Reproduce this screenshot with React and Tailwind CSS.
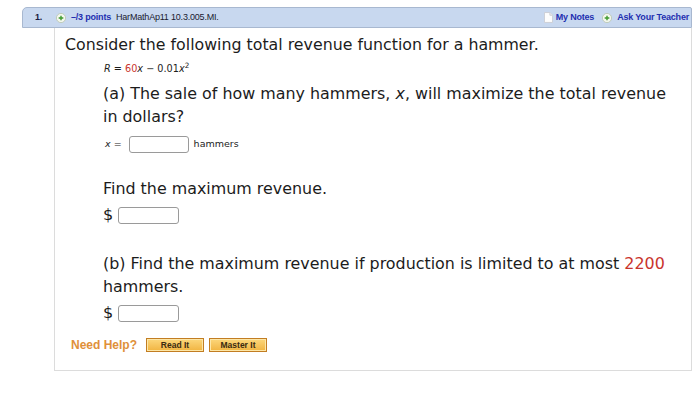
import { useState } from "react";

const PlusIcon = () => (
  <svg width="10" height="10" viewBox="0 0 12 12" className="shrink-0">
    <circle cx="6" cy="6" r="5.5" fill="#f4f7ef" stroke="#b9c6b0" />
    <path d="M6 3.2v5.6M3.2 6h5.6" stroke="#3f9a2e" strokeWidth="1.7" />
  </svg>
);

const NoteIcon = () => (
  <svg width="9" height="11" viewBox="0 0 10 12" className="shrink-0">
    <path d="M0.5 0.5h6l3 3v8h-9z" fill="#fdfdfd" stroke="#c9ccd2" />
    <path d="M6.5 0.5v3h3" fill="#e9ebee" stroke="#c9ccd2" />
  </svg>
);

const Box = ({ w }) => (
  <input
    className={`h-[17px] ${w} rounded-[3px] border border-[#9a9a9a] bg-white outline-none`}
  />
);

const HelpBtn = ({ label }) => (
  <button className="h-[14px] w-[58px] border border-[#c27d22] bg-gradient-to-b from-[#fcd77a] to-[#f1b43e] text-[8.5px] font-bold leading-none text-[#3a2a10] shadow-[inset_0_0_0_1px_#fde7a8]">
    {label}
  </button>
);

export default function App() {
  const [x, setX] = useState("");
  return (
    <div className="h-[405px] w-[700px] bg-white pl-[22px] pt-[7px]">
      <div className="w-[670px]">
        <div
          className="flex h-[21px] items-center rounded-tl-[5px] rounded-tr-[2px] border border-[#a8b8d0] bg-[#c8d8ef] pr-[2px] text-[9px] font-bold tracking-[-0.2px]"
          style={{ fontFamily: "'Liberation Sans', Arial, sans-serif" }}
        >
          <span className="ml-[12px] w-[21px] text-[#1a1a40]">1.</span>
          <PlusIcon />
          <span className="ml-[5px] text-[#1f2fb0]">–/3 points</span>
          <span className="ml-[5px] font-normal text-[#1a1a30]">HarMathAp11 10.3.005.MI.</span>
          <div className="ml-auto flex items-center">
            <NoteIcon />
            <span className="ml-[3px] text-[#1f2fb0]">My Notes</span>
            <span className="ml-[8px]">
              <PlusIcon />
            </span>
            <span className="ml-[5px] text-[#1f2fb0]">Ask Your Teacher</span>
          </div>
        </div>
        <div
          className="ml-[32px] h-[343px] border-b border-l border-r border-[#dcdcdc] pl-[10px] pt-[7px] text-[#1c1c1c]"
          style={{ fontFamily: "'DejaVu Sans', Verdana, sans-serif" }}
        >
          <p className="text-[15.8px] leading-[20px]">
            Consider the following total revenue function for a hammer.
          </p>
          <p className="ml-[39px] mt-[7px] text-[9.7px] leading-[13px]">
            <i>R</i> = <span className="text-[#c9342c]">60</span>
            <i>x</i> − 0.01<i>x</i>
            <sup>2</sup>
          </p>
          <div className="ml-[38px] mt-[7px]">
            <p className="text-[15.9px] leading-[23px]">
              (a) The sale of how many hammers, <i>x</i>, will maximize the total revenue
              <br />
              in dollars?
            </p>
            <div className="mt-[8px] flex items-center text-[9.5px]">
              <span className="ml-[2px] mr-[7px]">
                <i>x</i> =
              </span>
              <input
                value={x}
                onChange={(e) => setX(e.target.value)}
                className="h-[17px] w-[60px] rounded-[3px] border border-[#9a9a9a] bg-white outline-none"
              />
              <span className="ml-[5px]">hammers</span>
            </div>
            <p className="mt-[24px] text-[15.9px] leading-[23px]">Find the maximum revenue.</p>
            <div className="mt-[3px] flex items-center text-[16px]">
              <span className="mr-[5px]">$</span>
              <Box w="w-[61px]" />
            </div>
            <p className="mt-[25px] text-[15.9px] leading-[23px]">
              (b) Find the maximum revenue if production is limited to at most{" "}
              <span className="text-[#c9342c]">2200</span>
              <br />
              hammers.
            </p>
            <div className="mt-[3px] flex items-center text-[16px]">
              <span className="mr-[5px]">$</span>
              <Box w="w-[61px]" />
            </div>
          </div>
          <div
            className="ml-[6px] mt-[11px] flex items-center"
            style={{ fontFamily: "'Liberation Sans', Arial, sans-serif" }}
          >
            <span className="mr-[9px] text-[12px] font-bold text-[#e0903a]">Need Help?</span>
            <HelpBtn label="Read It" />
            <span className="w-[5px]" />
            <HelpBtn label="Master It" />
          </div>
        </div>
      </div>
    </div>
  );
}
